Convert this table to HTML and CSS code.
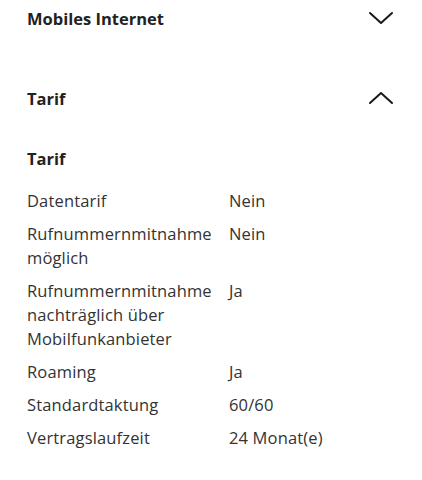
FILE: index.html
```html
<!DOCTYPE html>
<html lang="de">
<head>
<meta charset="utf-8">
<link rel="stylesheet" href="styles.css">
</head>
<body>
<div class="page">
  <div class="acc-head first">
    <span class="acc-title">Mobiles Internet</span>
    <svg class="chev" width="26" height="14" viewBox="0 0 26 14"><path d="M2 2 L13 12 L24 2" fill="none" stroke="#1a1a1a" stroke-width="2" stroke-linecap="round" stroke-linejoin="round"/></svg>
  </div>
  <div class="acc-head second">
    <span class="acc-title">Tarif</span>
    <svg class="chev" width="26" height="14" viewBox="0 0 26 14"><path d="M2 12 L13 2 L24 12" fill="none" stroke="#1a1a1a" stroke-width="2" stroke-linecap="round" stroke-linejoin="round"/></svg>
  </div>
  <div class="acc-body">
    <h3 class="sub">Tarif</h3>
    <div class="table">
      <div class="lbl">Datentarif</div><div class="val">Nein</div>
      <div class="lbl">Rufnummernmitnahme möglich</div><div class="val">Nein</div>
      <div class="lbl">Rufnummernmitnahme nachträglich über Mobilfunkanbieter</div><div class="val">Ja</div>
      <div class="lbl">Roaming</div><div class="val">Ja</div>
      <div class="lbl">Standardtaktung</div><div class="val">60/60</div>
      <div class="lbl">Vertragslaufzeit</div><div class="val">24 Monat(e)</div>
    </div>
  </div>
</div>
</body>
</html>
```
FILE: styles.css
```css
html, body {
  margin: 0;
  padding: 0;
  background: #fff;
}
.page {
  padding: 0 27px;
  font-family: "Open Sans", "Noto Sans", sans-serif;
  color: #333;
}
.acc-head {
  display: flex;
  justify-content: space-between;
  align-items: center;
  height: 36px;
}
.acc-head.second {
  margin-top: 44px;
}
.acc-title {
  font-size: 16.5px;
  font-weight: 700;
  color: #222;
}
.chev {
  margin-right: 1px;
}
.acc-body {
  margin-top: 31px;
}
.sub {
  margin: 0;
  font-size: 16.5px;
  line-height: 24px;
  font-weight: 700;
  color: #222;
}
.table {
  margin-top: 18px;
  display: grid;
  grid-template-columns: 202px 1fr;
  row-gap: 9px;
  font-size: 16.5px;
  letter-spacing: 0.15px;
  line-height: 24px;
}
```
